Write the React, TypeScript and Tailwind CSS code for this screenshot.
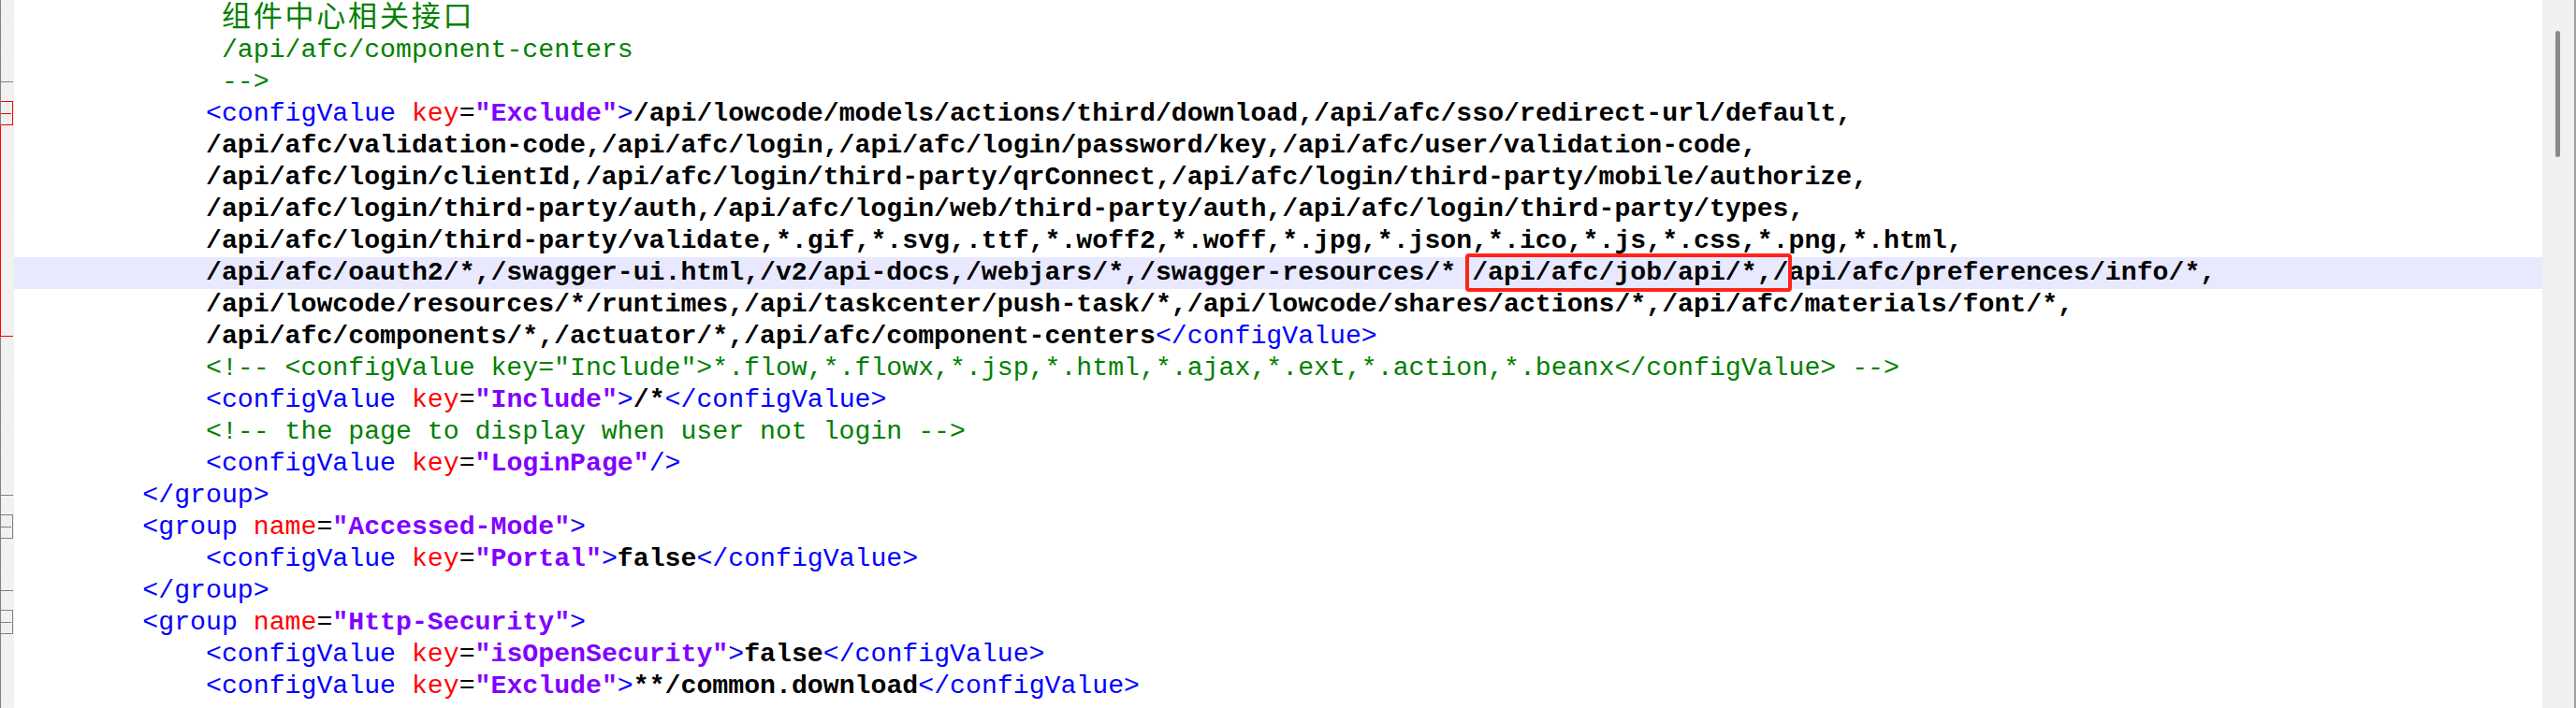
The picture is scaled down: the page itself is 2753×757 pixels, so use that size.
import React from 'react';

type Kind = 't' | 'a' | 'e' | 'v' | 'x' | 'c' | 'z' | 'p';
type Seg = [Kind, string];
type Mark = 'box' | 'boxRed' | 'redLine' | 'redEnd' | 'end';

type Row = { segs: Seg[]; mark?: Mark; hl?: boolean; low?: boolean };

const kindClass: Record<Kind, string> = {
  p: '',
  t: 'text-[#0000ff]',
  a: 'text-[#ff0000]',
  e: 'text-black',
  v: 'text-[#8000ff] font-bold',
  x: 'text-black font-bold',
  c: 'text-[#008000]',
  z: 'text-[#008000] text-[31px] tracking-[2.8px]',
};

const T3 = '\t\t\t';
const T2 = '\t\t';

const cv = (key: string, val?: string): Seg[] =>
  val === undefined
    ? [['t', '<configValue '], ['a', 'key'], ['e', '='], ['v', `"${key}"`], ['t', '/>']]
    : [['t', '<configValue '], ['a', 'key'], ['e', '='], ['v', `"${key}"`], ['t', '>'], ['x', val], ['t', '</configValue>']];

const group = (name: string): Seg[] => [['t', '<group '], ['a', 'name'], ['e', '='], ['v', `"${name}"`], ['t', '>']];

const rows: Row[] = [
  { segs: [['p', T3 + ' '], ['z', '组件中心相关接口']] },
  { segs: [['p', T3 + ' '], ['c', '/api/afc/component-centers']] },
  { segs: [['p', T3 + ' '], ['c', '-->']], mark: 'end' },
  {
    segs: [
      ['p', T3],
      ['t', '<configValue '], ['a', 'key'], ['e', '='], ['v', '"Exclude"'], ['t', '>'],
      ['x', '/api/lowcode/models/actions/third/download,/api/afc/sso/redirect-url/default,'],
    ],
    mark: 'boxRed',
  },
  { segs: [['p', T3], ['x', '/api/afc/validation-code,/api/afc/login,/api/afc/login/password/key,/api/afc/user/validation-code,']], mark: 'redLine' },
  { segs: [['p', T3], ['x', '/api/afc/login/clientId,/api/afc/login/third-party/qrConnect,/api/afc/login/third-party/mobile/authorize,']], mark: 'redLine' },
  { segs: [['p', T3], ['x', '/api/afc/login/third-party/auth,/api/afc/login/web/third-party/auth,/api/afc/login/third-party/types,']], mark: 'redLine' },
  { segs: [['p', T3], ['x', '/api/afc/login/third-party/validate,*.gif,*.svg,.ttf,*.woff2,*.woff,*.jpg,*.json,*.ico,*.js,*.css,*.png,*.html,']], mark: 'redLine' },
  {
    segs: [['p', T3], ['x', '/api/afc/oauth2/*,/swagger-ui.html,/v2/api-docs,/webjars/*,/swagger-resources/* /api/afc/job/api/*,/api/afc/preferences/info/*,']],
    mark: 'redLine',
    hl: true,
  },
  { segs: [['p', T3], ['x', '/api/lowcode/resources/*/runtimes,/api/taskcenter/push-task/*,/api/lowcode/shares/actions/*,/api/afc/materials/font/*,']], mark: 'redLine' },
  { segs: [['p', T3], ['x', '/api/afc/components/*,/actuator/*,/api/afc/component-centers'], ['t', '</configValue>']], mark: 'redEnd' },
  { segs: [['p', T3], ['c', '<!-- <configValue key="Include">*.flow,*.flowx,*.jsp,*.html,*.ajax,*.ext,*.action,*.beanx</configValue> -->']] },
  { segs: [['p', T3], ...cv('Include', '/*')] },
  { segs: [['p', T3], ['c', '<!-- the page to display when user not login -->']] },
  { segs: [['p', T3], ...cv('LoginPage')] },
  { segs: [['p', T2], ['t', '</group>']], mark: 'end' },
  { segs: [['p', T2], ...group('Accessed-Mode')], mark: 'box' },
  { segs: [['p', T3], ...cv('Portal', 'false')] },
  { segs: [['p', T2], ['t', '</group>']], mark: 'end' },
  { segs: [['p', T2], ...group('Http-Security')], mark: 'box' },
  { segs: [['p', T3], ...cv('isOpenSecurity', 'false')] },
  { segs: [['p', T3], ...cv('Exclude', '**/common.download')] },
  {
    segs: [['p', T3 + '\t\t\t\t\t\t\t  '], ['x', '/api/afc/login/third-party/'], ['t', '<'], ['x', 'list/all,/api/afc/file/download/*,'], ['t', 'l']],
    low: true,
  },
];

const hatch = 'bg-[repeating-conic-gradient(#e6e6e6_0_25%,#fdfdfd_0_50%)] bg-[length:2px_2px]';

// fold margin cell: left border is the fold line, markers sit in flow
const Margin = ({ mark }: { mark?: Mark }) => {
  if (mark === 'redEnd') {
    return (
      <div className={`w-[15px] h-full shrink-0 flex flex-col ${hatch}`}>
        <div className="h-[16px] border-l border-[#ff0000]" />
        <div className="h-px w-[14px] bg-[#ff0000]" />
        <div className="flex-1 border-l border-[#808080]" />
      </div>
    );
  }
  const red = mark === 'redLine';
  const boxRed = mark === 'boxRed';
  return (
    <div className={`w-[15px] h-full shrink-0 flex flex-col border-l ${red ? 'border-[#ff0000]' : 'border-[#808080]'} ${hatch}`}>
      {mark === 'end' && <div className="mt-[16px] h-px w-[13px] bg-[#808080]" />}
      {(mark === 'box' || boxRed) && (
        <>
          <div
            className={`mt-[3px] h-[26px] w-[13px] flex items-center border-y border-r bg-[#f0f0f0] ${
              boxRed ? 'border-[#ff0000]' : 'border-[#808080]'
            }`}
          >
            <div className={`h-px w-[11px] ${boxRed ? 'bg-[#ff0000]' : 'bg-[#808080]'}`} />
          </div>
          {boxRed && <div className="flex-1 -ml-px border-l border-[#ff0000]" />}
        </>
      )}
    </div>
  );
};

const CodeRow = ({ row }: { row: Row }) => (
  <div className="flex h-[34px] shrink-0">
    <Margin mark={row.mark} />
    <div
      className={`flex-1 pl-[2px] whitespace-pre [tab-size:4] leading-[34px] ${row.hl ? 'bg-[#e8e8ff]' : ''} ${
        row.low ? 'pt-[3px]' : ''
      }`}
    >
      {row.segs.map(([k, s], i) => (
        <span key={i} className={kindClass[k]}>
          {s}
        </span>
      ))}
    </div>
  </div>
);

export default function App() {
  return (
    <div className="flex w-[2753px] h-[757px] overflow-hidden bg-white font-['Liberation_Mono','Noto_Sans_CJK_SC',monospace] text-[28.2px]">
      <div className="relative flex-1 flex flex-col overflow-hidden">
        <div className="flex h-[3px] shrink-0">
          <Margin />
          <div className="flex-1" />
        </div>
        {rows.map((row, i) => (
          <CodeRow key={i} row={row} />
        ))}
        {/* red annotation box drawn over the job api path */}
        <div className="absolute left-[1566px] top-[271px] w-[349px] h-[41px] border-[4px] border-[#ff2419] rounded-[4px]" />
      </div>

      <div className="w-[36px] shrink-0 bg-[#f0f0f0] border-r-2 border-[#a0a0a0] pt-[33px] pl-[14px]">
        <div className="w-[5px] h-[135px] rounded-full bg-[#8a8a8a]" />
      </div>
    </div>
  );
}
